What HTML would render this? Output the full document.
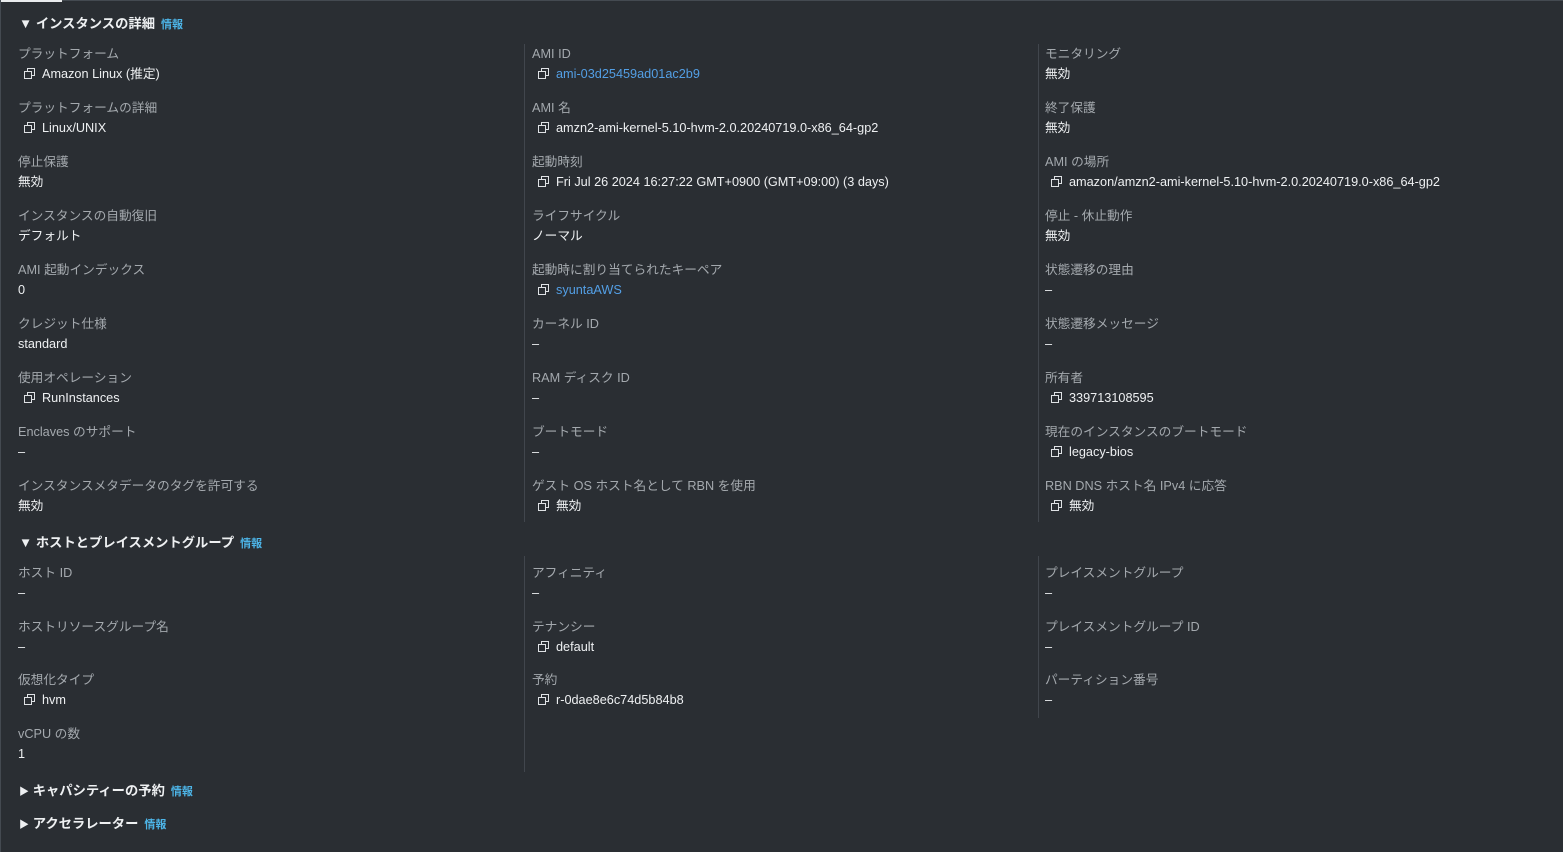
<!DOCTYPE html><html><head><meta charset="utf-8"><style>
body{margin:0;width:1563px;height:852px;background:#2a2e33;font-family:"Liberation Sans","Noto Sans CJK JP",sans-serif;font-size:12.7px;color:#e9ebed;position:relative;overflow:hidden}
.a{position:absolute;white-space:nowrap;line-height:16px;margin-top:1px}
.l{color:#a4a9ae}
.v{color:#eef0f2}
.k{color:#539fe5}
.h{font-weight:bold;color:#eef0f2;font-size:13.3px}
.i{color:#4db5e8;font-size:11px;font-weight:bold;margin-left:6px}
.c{display:inline-block;width:11px;height:11px;position:relative;margin-right:7px;vertical-align:-1px}
.c:before,.c:after{content:"";position:absolute;width:6px;height:6px;border:1.6px solid #dfe2e5}
.c:before{left:3px;top:0}.c:after{left:0;top:3px;background:#2a2e33}
.d{position:absolute;width:1px;background:#41464d}
</style></head><body>
<div style="position:absolute;left:0;top:0;width:1563px;height:1px;background:#444a51"></div>
<div style="position:absolute;left:0;top:0;width:62px;height:2px;background:#e9ebed"></div>
<div style="position:absolute;left:0;top:0;width:1px;height:852px;background:#444a51"></div>
<div class="d" style="left:524px;top:44px;height:478px"></div>
<div class="d" style="left:1038px;top:44px;height:478px"></div>
<div class="d" style="left:524px;top:556px;height:216px"></div>
<div class="d" style="left:1038px;top:556px;height:162px"></div>

<div class="a h" style="left:19px;top:15px">▼ インスタンスの詳細<span class="i">情報</span></div>
<div class="a h" style="left:19px;top:534px">▼ ホストとプレイスメントグループ<span class="i">情報</span></div>
<div class="a h" style="left:19px;top:782px"><span style="font-size:10px">▶</span> キャパシティーの予約<span class="i">情報</span></div>
<div class="a h" style="left:19px;top:815px"><span style="font-size:10px">▶</span> アクセラレーター<span class="i">情報</span></div>

<div class="a l" style="left:18px;top:45px">プラットフォーム</div><div class="a v" style="left:24px;top:65px"><span class="c"></span>Amazon Linux (推定)</div>
<div class="a l" style="left:18px;top:99px">プラットフォームの詳細</div><div class="a v" style="left:24px;top:119px"><span class="c"></span>Linux/UNIX</div>
<div class="a l" style="left:18px;top:153px">停止保護</div><div class="a v" style="left:18px;top:173px">無効</div>
<div class="a l" style="left:18px;top:207px">インスタンスの自動復旧</div><div class="a v" style="left:18px;top:227px">デフォルト</div>
<div class="a l" style="left:18px;top:261px">AMI 起動インデックス</div><div class="a v" style="left:18px;top:281px">0</div>
<div class="a l" style="left:18px;top:315px">クレジット仕様</div><div class="a v" style="left:18px;top:335px">standard</div>
<div class="a l" style="left:18px;top:369px">使用オペレーション</div><div class="a v" style="left:24px;top:389px"><span class="c"></span>RunInstances</div>
<div class="a l" style="left:18px;top:423px">Enclaves のサポート</div><div class="a v" style="left:18px;top:443px">–</div>
<div class="a l" style="left:18px;top:477px">インスタンスメタデータのタグを許可する</div><div class="a v" style="left:18px;top:497px">無効</div>

<div class="a l" style="left:532px;top:45px">AMI ID</div><div class="a k" style="left:538px;top:65px"><span class="c"></span>ami-03d25459ad01ac2b9</div>
<div class="a l" style="left:532px;top:99px">AMI 名</div><div class="a v" style="left:538px;top:119px"><span class="c"></span>amzn2-ami-kernel-5.10-hvm-2.0.20240719.0-x86_64-gp2</div>
<div class="a l" style="left:532px;top:153px">起動時刻</div><div class="a v" style="left:538px;top:173px"><span class="c"></span>Fri Jul 26 2024 16:27:22 GMT+0900 (GMT+09:00) (3 days)</div>
<div class="a l" style="left:532px;top:207px">ライフサイクル</div><div class="a v" style="left:532px;top:227px">ノーマル</div>
<div class="a l" style="left:532px;top:261px">起動時に割り当てられたキーペア</div><div class="a k" style="left:538px;top:281px"><span class="c"></span>syuntaAWS</div>
<div class="a l" style="left:532px;top:315px">カーネル ID</div><div class="a v" style="left:532px;top:335px">–</div>
<div class="a l" style="left:532px;top:369px">RAM ディスク ID</div><div class="a v" style="left:532px;top:389px">–</div>
<div class="a l" style="left:532px;top:423px">ブートモード</div><div class="a v" style="left:532px;top:443px">–</div>
<div class="a l" style="left:532px;top:477px">ゲスト OS ホスト名として RBN を使用</div><div class="a v" style="left:538px;top:497px"><span class="c"></span>無効</div>

<div class="a l" style="left:1045px;top:45px">モニタリング</div><div class="a v" style="left:1045px;top:65px">無効</div>
<div class="a l" style="left:1045px;top:99px">終了保護</div><div class="a v" style="left:1045px;top:119px">無効</div>
<div class="a l" style="left:1045px;top:153px">AMI の場所</div><div class="a v" style="left:1051px;top:173px"><span class="c"></span>amazon/amzn2-ami-kernel-5.10-hvm-2.0.20240719.0-x86_64-gp2</div>
<div class="a l" style="left:1045px;top:207px">停止 - 休止動作</div><div class="a v" style="left:1045px;top:227px">無効</div>
<div class="a l" style="left:1045px;top:261px">状態遷移の理由</div><div class="a v" style="left:1045px;top:281px">–</div>
<div class="a l" style="left:1045px;top:315px">状態遷移メッセージ</div><div class="a v" style="left:1045px;top:335px">–</div>
<div class="a l" style="left:1045px;top:369px">所有者</div><div class="a v" style="left:1051px;top:389px"><span class="c"></span>339713108595</div>
<div class="a l" style="left:1045px;top:423px">現在のインスタンスのブートモード</div><div class="a v" style="left:1051px;top:443px"><span class="c"></span>legacy-bios</div>
<div class="a l" style="left:1045px;top:477px">RBN DNS ホスト名 IPv4 に応答</div><div class="a v" style="left:1051px;top:497px"><span class="c"></span>無効</div>

<div class="a l" style="left:18px;top:564px">ホスト ID</div><div class="a v" style="left:18px;top:584px">–</div>
<div class="a l" style="left:18px;top:618px">ホストリソースグループ名</div><div class="a v" style="left:18px;top:638px">–</div>
<div class="a l" style="left:18px;top:671px">仮想化タイプ</div><div class="a v" style="left:24px;top:691px"><span class="c"></span>hvm</div>
<div class="a l" style="left:18px;top:725px">vCPU の数</div><div class="a v" style="left:18px;top:745px">1</div>

<div class="a l" style="left:532px;top:564px">アフィニティ</div><div class="a v" style="left:532px;top:584px">–</div>
<div class="a l" style="left:532px;top:618px">テナンシー</div><div class="a v" style="left:538px;top:638px"><span class="c"></span>default</div>
<div class="a l" style="left:532px;top:671px">予約</div><div class="a v" style="left:538px;top:691px"><span class="c"></span>r-0dae8e6c74d5b84b8</div>

<div class="a l" style="left:1045px;top:564px">プレイスメントグループ</div><div class="a v" style="left:1045px;top:584px">–</div>
<div class="a l" style="left:1045px;top:618px">プレイスメントグループ ID</div><div class="a v" style="left:1045px;top:638px">–</div>
<div class="a l" style="left:1045px;top:671px">パーティション番号</div><div class="a v" style="left:1045px;top:691px">–</div>
</body></html>
